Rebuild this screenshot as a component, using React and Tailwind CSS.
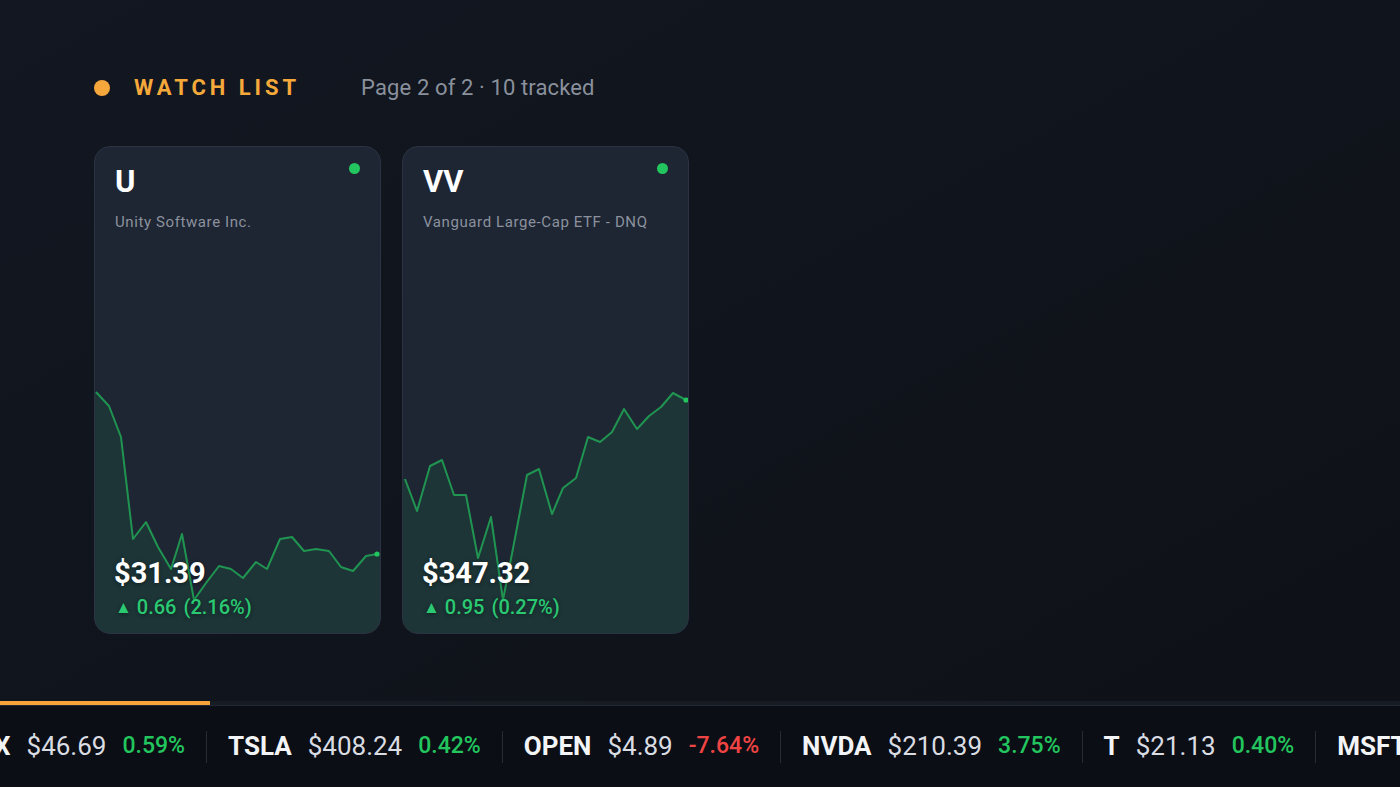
import React from 'react';

// watch list cards — points are in card-local px (card is 287 x 488)
const cards = [
  {
    symbol: 'U',
    name: 'Unity Software Inc.',
    price: '$31.39',
    change: '0.66',
    pct: '2.16%',
    points: [
      [2, 246], [15, 260], [27, 291], [39, 393], [52, 376], [64, 401], [77, 423], [88, 388],
      [100, 454], [112, 437], [125, 420], [137, 423], [149, 432], [162, 416], [173, 423],
      [186, 393], [198, 391], [210, 405], [222, 403], [235, 405], [247, 421], [259, 425],
      [272, 410], [283, 408],
    ],
  },
  {
    symbol: 'VV',
    name: 'Vanguard Large-Cap ETF - DNQ',
    price: '$347.32',
    change: '0.95',
    pct: '0.27%',
    points: [
      [3, 333], [15, 365], [28, 320], [40, 314], [52, 349], [64, 349], [76, 412], [89, 371],
      [101, 454], [113, 392], [125, 329], [137, 323], [150, 368], [161, 342], [174, 332],
      [186, 291], [198, 296], [210, 286], [222, 263], [235, 283], [247, 270], [259, 261],
      [271, 247], [284, 254],
    ],
  },
];

const ticker = [
  { sym: 'X', price: '$46.69', pct: '0.59%', up: true },
  { sym: 'TSLA', price: '$408.24', pct: '0.42%', up: true },
  { sym: 'OPEN', price: '$4.89', pct: '-7.64%', up: false },
  { sym: 'NVDA', price: '$210.39', pct: '3.75%', up: true },
  { sym: 'T', price: '$21.13', pct: '0.40%', up: true },
  { sym: 'MSFT', price: '$517.03', pct: '0.48%', up: true },
];

function Sparkline({ points }) {
  const line = points.map(([x, y]) => `${x},${y}`).join(' ');
  const first = points[0];
  const last = points[points.length - 1];
  const area = `M0,${first[1]} L${line.split(' ').join(' L')} L288,${last[1]} L288,490 L0,490 Z`;
  return (
    <svg className="absolute inset-0 w-full h-full" viewBox="1 1 285 486" preserveAspectRatio="none">
      <path d={area} fill="rgba(34,197,94,0.1)" />
      <polyline points={line} fill="none" stroke="#22c55e" strokeOpacity="0.68" strokeWidth="2" strokeLinejoin="round" />
      <circle cx={last[0]} cy={last[1]} r="2.6" fill="#22c55e" />
    </svg>
  );
}

function Card({ card }) {
  return (
    <div className="relative w-[287px] h-[488px] rounded-2xl border border-[#2b3342] bg-[#1e2533] overflow-hidden">
      <Sparkline points={card.points} />
      <span className="absolute top-[16px] right-[20px] w-[11px] h-[11px] rounded-full bg-[#22c55e]" />
      <div className="relative h-full flex flex-col justify-between px-5 pt-[19px] pb-[16px]">
        <div>
          <div className="text-[31px] leading-none font-bold text-white">{card.symbol}</div>
          <div className="mt-[18px] text-[15px] leading-none tracking-[0.6px] text-[#8b929e]">{card.name}</div>
        </div>
        <div className="[text-shadow:0_1px_4px_rgba(0,0,0,0.45)]">
          <div className="-ml-px text-[29px] leading-none font-bold text-white">{card.price}</div>
          <div className="mt-[9px] flex items-center text-[20px] leading-none font-medium text-[#2ac972]">
            <span className="text-[17px] mr-[5px]">▲</span>
            <span>{card.change}</span>
            <span className="ml-[7px]">({card.pct})</span>
          </div>
        </div>
      </div>
    </div>
  );
}

export default function App() {
  return (
    <div className="h-screen w-full flex flex-col overflow-hidden bg-gradient-to-br from-[#121721] to-[#0e1117] font-[Roboto,'Liberation_Sans',sans-serif]">
      <main className="flex-1 pt-[76px] px-[94px]">
        {/* section header */}
        <div className="h-6 flex items-center">
          <span className="w-4 h-4 rounded-full bg-[#f6a73b]" />
          <span className="ml-6 text-[22px] leading-none font-bold tracking-[0.18em] text-[#f5a93b]">WATCH LIST</span>
          <span className="ml-[61px] text-[22px] leading-none tracking-[0.12px] text-[#8a919c]">Page 2 of 2 · 10 tracked</span>
        </div>

        <div className="mt-[46px] flex gap-[21px]">
          {cards.map(c => <Card key={c.symbol} card={c} />)}
        </div>
      </main>

      {/* page progress + ticker tape */}
      <div className="h-[5px] bg-[#171c24] border-b border-[#222833]">
        <div className="h-1 w-[210px] bg-[#f5a33a]" />
      </div>
      <div className="h-[81px] bg-[#0b0e14] flex items-center overflow-hidden whitespace-nowrap">
        <div className="flex items-center -ml-[27px]">
          {ticker.map(t => (
            <React.Fragment key={t.sym}>
              <div className="flex items-center gap-4 px-[21px]">
                <span className="text-[26px] font-bold text-[#f3f4f6]">{t.sym}</span>
                <span className="text-[26px] text-[#d9dce2]">{t.price}</span>
                <span className={`text-[23px] font-medium ${t.up ? 'text-[#22c55e]' : 'text-[#ef4444]'}`}>{t.pct}</span>
              </div>
              <div className="w-px h-8 bg-[#262c36]" />
            </React.Fragment>
          ))}
        </div>
      </div>
    </div>
  );
}
